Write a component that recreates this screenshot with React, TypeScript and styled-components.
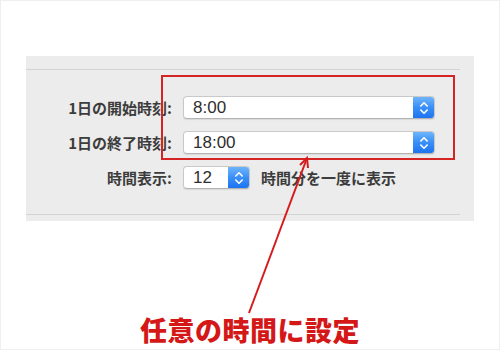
import styled, { createGlobalStyle } from "styled-components";

const GlobalStyle = createGlobalStyle`
  html, body {
    margin: 0;
    padding: 0;
    background: #ffffff;
  }
  * {
    box-sizing: border-box;
  }
`;

const StepperIcon = () => (
  <svg width="10" height="14" viewBox="0 0 10 14" fill="none">
    <path d="M1.8 5 L5 1.8 L8.2 5" stroke="#fff" strokeWidth="1.6" strokeLinecap="round" strokeLinejoin="round" />
    <path d="M1.8 9 L5 12.2 L8.2 9" stroke="#fff" strokeWidth="1.6" strokeLinecap="round" strokeLinejoin="round" />
  </svg>
);

const Popup = ({ value, width }: { value: string; width: number }) => (
  <PopupBox $width={width}>
    <PopupValue>{value}</PopupValue>
    <Stepper>
      <StepperIcon />
    </Stepper>
  </PopupBox>
);

const App = () => {
  return (
    <Page>
      <GlobalStyle />
      <Panel>
        <Rule />
        <Form>
          <Label>1日の開始時刻:</Label>
          <Popup value="8:00" width={252} />
          <Label>1日の終了時刻:</Label>
          <Popup value="18:00" width={252} />
          <Label>時間表示:</Label>
          <Control>
            <Popup value="12" width={67} />
            <Note>時間分を一度に表示</Note>
          </Control>
        </Form>
        <BottomRule />
        <Highlight />
      </Panel>
      <Caption>任意の時間に設定</Caption>
      <Arrow width="500" height="350" viewBox="0 0 500 350">
        <path d="M249 313 L307 158" stroke="#d41c1c" strokeWidth="2" fill="none" />
        <path d="M300 165 L307 158 L308 168" stroke="#d41c1c" strokeWidth="2" fill="none" strokeLinejoin="miter" />
      </Arrow>
    </Page>
  );
};

export default App;

const Page = styled.div`
  position: relative;
  width: 500px;
  height: 350px;
  border: 1px solid #efefef;
  display: flex;
  flex-direction: column;
  overflow: hidden;
  font-family: "Noto Sans CJK JP", "Liberation Sans", sans-serif;
`
const Panel = styled.div`
  position: relative;
  margin: 55px 0 0 25px;
  width: 448px;
  height: 165px;
  background: #ececec;
  display: flex;
  flex-direction: column;
`
const Rule = styled.div`
  margin-top: 13px;
  width: 434px;
  height: 1px;
  background: #d4d4d4;
`
const BottomRule = styled(Rule)`
  margin-top: auto;
  margin-bottom: 6px;
`
const Form = styled.div`
  display: grid;
  grid-template-columns: 146px auto;
  column-gap: 11px;
  row-gap: 12px;
  align-items: center;
  padding-top: 26px;
`
const Label = styled.div`
  text-align: right;
  font-size: 15px;
  font-weight: 700;
  color: #3c3c3c;
  line-height: 23px;
  white-space: nowrap;
`
const Control = styled.div`
  display: flex;
  align-items: center;
  gap: 11px;
`
const PopupBox = styled.div<{ $width: number }>`
  width: ${(p) => p.$width}px;
  height: 23px;
  display: flex;
  align-items: stretch;
  background: #ffffff;
  border: 1px solid #c9c9c9;
  border-bottom-color: #b3b3b3;
  border-radius: 4px;
  box-shadow: 0 1px 1px rgba(0, 0, 0, 0.08);
  overflow: hidden;
`
const PopupValue = styled.div`
  flex: 1;
  padding-left: 9px;
  font-family: "Liberation Sans", Arial, sans-serif;
  font-size: 17px;
  line-height: 21px;
  color: #2e2e2e;
`
const Stepper = styled.div`
  width: 21px;
  display: flex;
  align-items: center;
  justify-content: center;
  background: linear-gradient(180deg, #6db4fb 0%, #3a8ff7 50%, #1c74ef 100%);
`
const Note = styled.div`
  font-size: 15px;
  font-weight: 700;
  color: #3c3c3c;
  white-space: nowrap;
`
const Highlight = styled.div`
  position: absolute;
  left: 135px;
  top: 19px;
  width: 294px;
  height: 85px;
  border: 2px solid #d42424;
  pointer-events: none;
`
const Caption = styled.div`
  margin-top: 94px;
  text-align: center;
  font-size: 27px;
  line-height: 30px;
  font-weight: 900;
  color: #d41818;
  letter-spacing: 0.5px;
`
const Arrow = styled.svg`
  position: absolute;
  left: -1px;
  top: -1px;
  pointer-events: none;
`
